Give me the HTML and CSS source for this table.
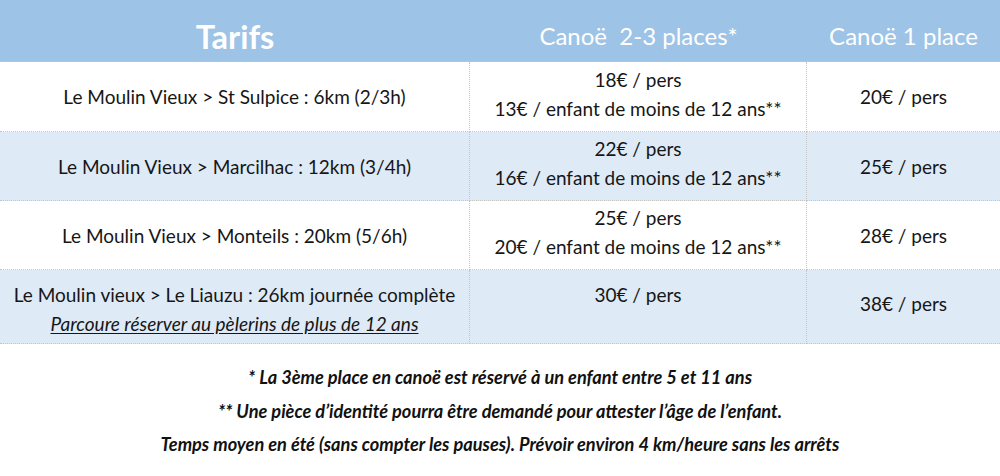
FILE: index.html
```html
<!DOCTYPE html>
<html lang="fr">
<head>
<meta charset="utf-8">
<title>Tarifs</title>
<link rel="stylesheet" href="styles.css">
</head>
<body>
<div class="table">
  <div class="cell head title">Tarifs</div>
  <div class="cell head col">Canoë&nbsp; 2-3 places*</div>
  <div class="cell head col last">Canoë 1 place</div>

  <div class="cell">Le Moulin Vieux &gt; St Sulpice : 6km (2/3h)</div>
  <div class="cell stack"><span>18€ / pers</span><span>13€ / enfant de moins de 12 ans**</span></div>
  <div class="cell last">20€ / pers</div>

  <div class="cell alt">Le Moulin Vieux &gt; Marcilhac : 12km (3/4h)</div>
  <div class="cell alt stack"><span>22€ / pers</span><span>16€ / enfant de moins de 12 ans**</span></div>
  <div class="cell alt last">25€ / pers</div>

  <div class="cell">Le Moulin Vieux &gt; Monteils : 20km (5/6h)</div>
  <div class="cell stack"><span>25€ / pers</span><span>20€ / enfant de moins de 12 ans**</span></div>
  <div class="cell last">28€ / pers</div>

  <div class="cell alt stack tall"><span>Le Moulin vieux &gt; Le Liauzu : 26km journée complète</span><span class="note">Parcoure réserver au pèlerins de plus de 12 ans</span></div>
  <div class="cell alt stack tall"><span>30€ / pers</span><span>&nbsp;</span></div>
  <div class="cell alt last tall single">38€ / pers</div>
</div>
<div class="footer">
  <p>* La 3ème place en canoë est réservé à un enfant entre 5 et 11 ans</p>
  <p>** Une pièce d’identité pourra être demandé pour attester l’âge de l’enfant.</p>
  <p>Temps moyen en été (sans compter les pauses). Prévoir environ 4 km/heure sans les arrêts</p>
</div>
</body>
</html>
```
FILE: styles.css
```css
html, body {
  margin: 0;
  padding: 0;
  background: #ffffff;
}
body {
  width: 1000px;
  height: 476px;
  overflow: hidden;
  font-family: Lato, "Open Sans", sans-serif;
  color: #161616;
}
.table {
  display: grid;
  grid-template-columns: 470px 337px 193px;
  grid-template-rows: 62px 70px 69px 69px 74px;
}
.cell {
  display: flex;
  align-items: center;
  justify-content: center;
  text-align: center;
  font-size: 19px;
  white-space: nowrap;
  border-bottom: 1px dotted #c4c4c4;
  border-right: 1px dotted #c4c4c4;
  background: #ffffff;
  box-sizing: border-box;
}
.cell.last {
  border-right: none;
}
.cell.alt {
  background: #deeaf6;
}
.cell.head {
  background: #9dc3e6;
  color: #ffffff;
  border-right: none;
  padding-top: 10px;
}
.cell.head.title {
  font-size: 32.5px;
  font-weight: 700;
  padding-top: 12px;
}
.cell.head.col {
  font-size: 24px;
}
.stack {
  flex-direction: column;
  line-height: 29px;
  padding-bottom: 6px;
}
.stack.tall {
  padding-top: 4px;
  padding-bottom: 0;
}
.cell.single {
  padding-bottom: 6px;
}
.note {
  font-style: italic;
  text-decoration: underline;
  text-underline-offset: 2px;
}
.footer {
  padding-top: 17px;
  text-align: center;
  font-weight: 700;
  font-style: italic;
  font-size: 18.2px;
  color: #111111;
}
.footer p {
  margin: 0;
  height: 33.5px;
  line-height: 33.5px;
}
```
